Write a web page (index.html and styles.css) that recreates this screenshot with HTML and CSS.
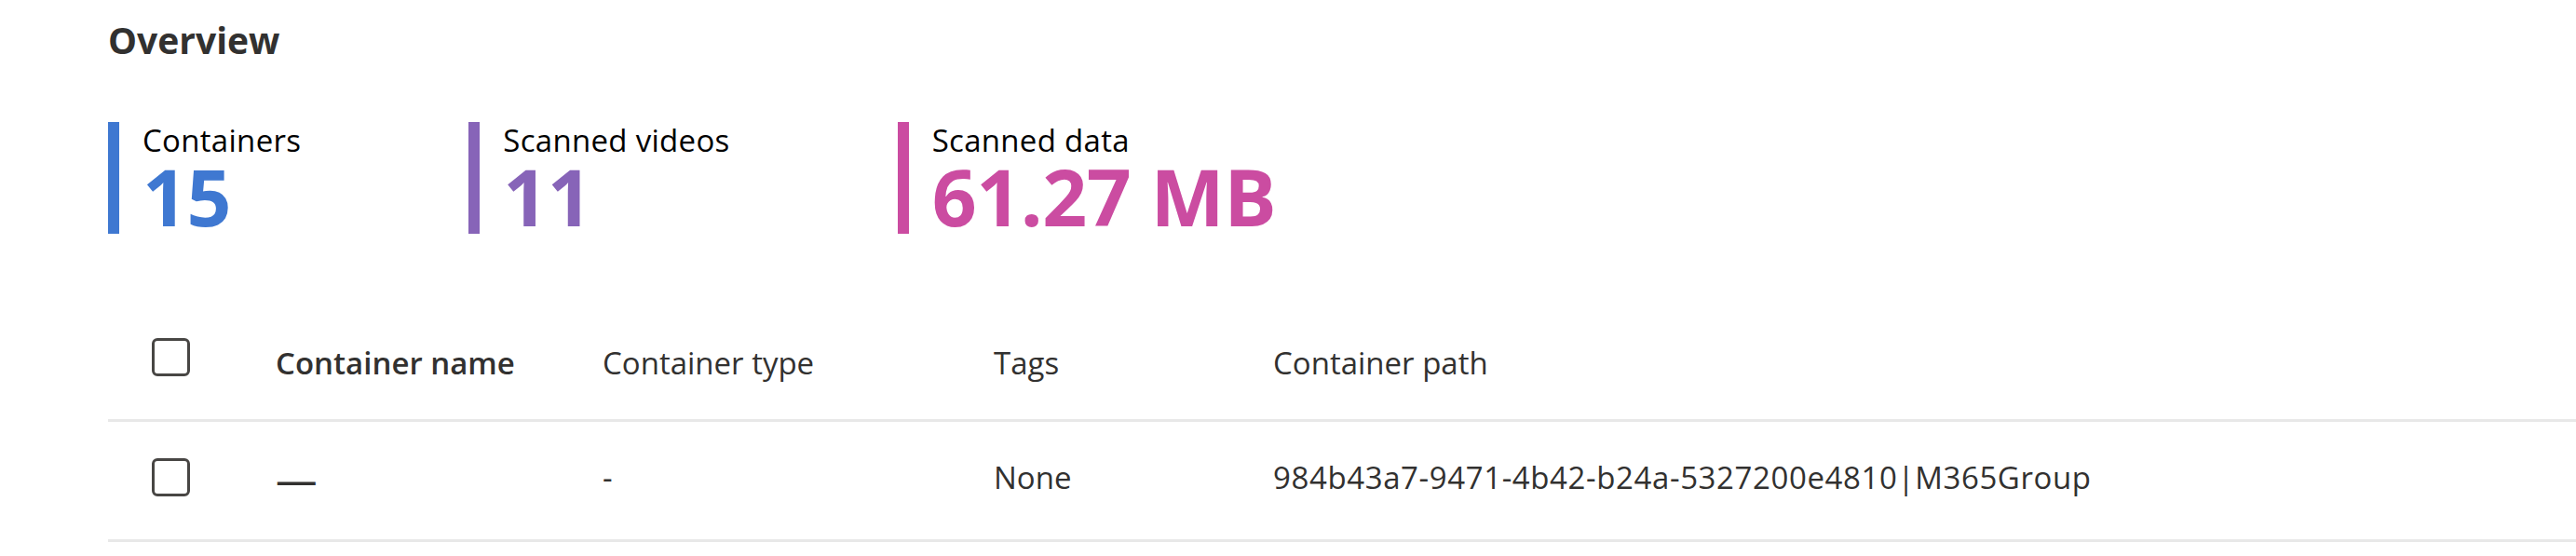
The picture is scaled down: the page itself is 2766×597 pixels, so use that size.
FILE: index.html
```html
<!DOCTYPE html>
<html lang="en">
<head>
<meta charset="utf-8">
<title>Overview</title>
<link rel="stylesheet" href="styles.css">
</head>
<body>
<main class="page">
  <h1 class="title">Overview</h1>
  <section class="stats">
    <div class="stat stat-blue">
      <div class="stat-label">Containers</div>
      <div class="stat-value">15</div>
    </div>
    <div class="stat stat-purple">
      <div class="stat-label">Scanned videos</div>
      <div class="stat-value">11</div>
    </div>
    <div class="stat stat-pink">
      <div class="stat-label">Scanned data</div>
      <div class="stat-value">61.27 MB</div>
    </div>
  </section>
  <section class="table">
    <div class="row row-head">
      <div class="cell-check"><span class="checkbox"></span></div>
      <div class="cell cell-strong">Container name</div>
      <div class="cell">Container type</div>
      <div class="cell">Tags</div>
      <div class="cell">Container path</div>
    </div>
    <div class="row row-data">
      <div class="cell-check"><span class="checkbox"></span></div>
      <div class="cell"><span class="dash">—</span></div>
      <div class="cell">-</div>
      <div class="cell">None</div>
      <div class="cell cell-path">984b43a7-9471-4b42-b24a-5327200e4810|M365Group</div>
    </div>
  </section>
</main>
</body>
</html>
```

FILE: styles.css
```css
html, body {
  margin: 0;
  padding: 0;
  background: #ffffff;
}

body {
  font-family: "Open Sans", "Noto Sans", "Liberation Sans", sans-serif;
  color: #323130;
}

.page {
  padding: 16px 0 0 116px;
}

.title {
  margin: 0;
  font-size: 39px;
  line-height: 53px;
  font-weight: 700;
  color: #323130;
}

.stats {
  display: flex;
  gap: 180px;
  margin-top: 62px;
}

.stat {
  border-left: 12px solid;
  padding-left: 25px;
}

.stat-blue { border-color: #3f78d1; }
.stat-purple { border-color: #8764b8; }
.stat-pink { border-color: #cb4ca1; }

.stat-label {
  font-size: 33px;
  line-height: 40px;
  letter-spacing: 0.3px;
  color: #000000;
}

.stat-value {
  font-size: 84px;
  line-height: 80px;
  font-weight: 700;
  letter-spacing: -0.5px;
}

.stat-blue .stat-value { color: #3f78d1; }
.stat-purple .stat-value { color: #8764b8; }
.stat-pink .stat-value { color: #cb4ca1; }

.table {
  margin-top: 66px;
}

.row {
  display: grid;
  grid-template-columns: 180px 351px 420px 300px 1fr;
  align-items: center;
  border-bottom: 3px solid #e8e8e8;
  font-size: 33px;
  line-height: 40px;
  color: #323130;
}

.row-head {
  height: 133px;
}

.row-head .cell {
  padding-top: 12px;
}

.row-data {
  height: 119px;
  padding-bottom: 7px;
}

.cell-check {
  padding-left: 47px;
  display: flex;
  align-items: center;
}

.checkbox {
  display: block;
  width: 41px;
  height: 41px;
  box-sizing: border-box;
  border: 3px solid #484644;
  border-radius: 6px;
}

.cell {
  white-space: nowrap;
}

.cell-strong {
  font-weight: 600;
}

.cell-path {
  letter-spacing: 0.6px;
}

.dash {
  display: inline-block;
  font-weight: 700;
  transform: scaleX(1.35);
  transform-origin: left center;
  position: relative;
  top: 3px;
}
```
